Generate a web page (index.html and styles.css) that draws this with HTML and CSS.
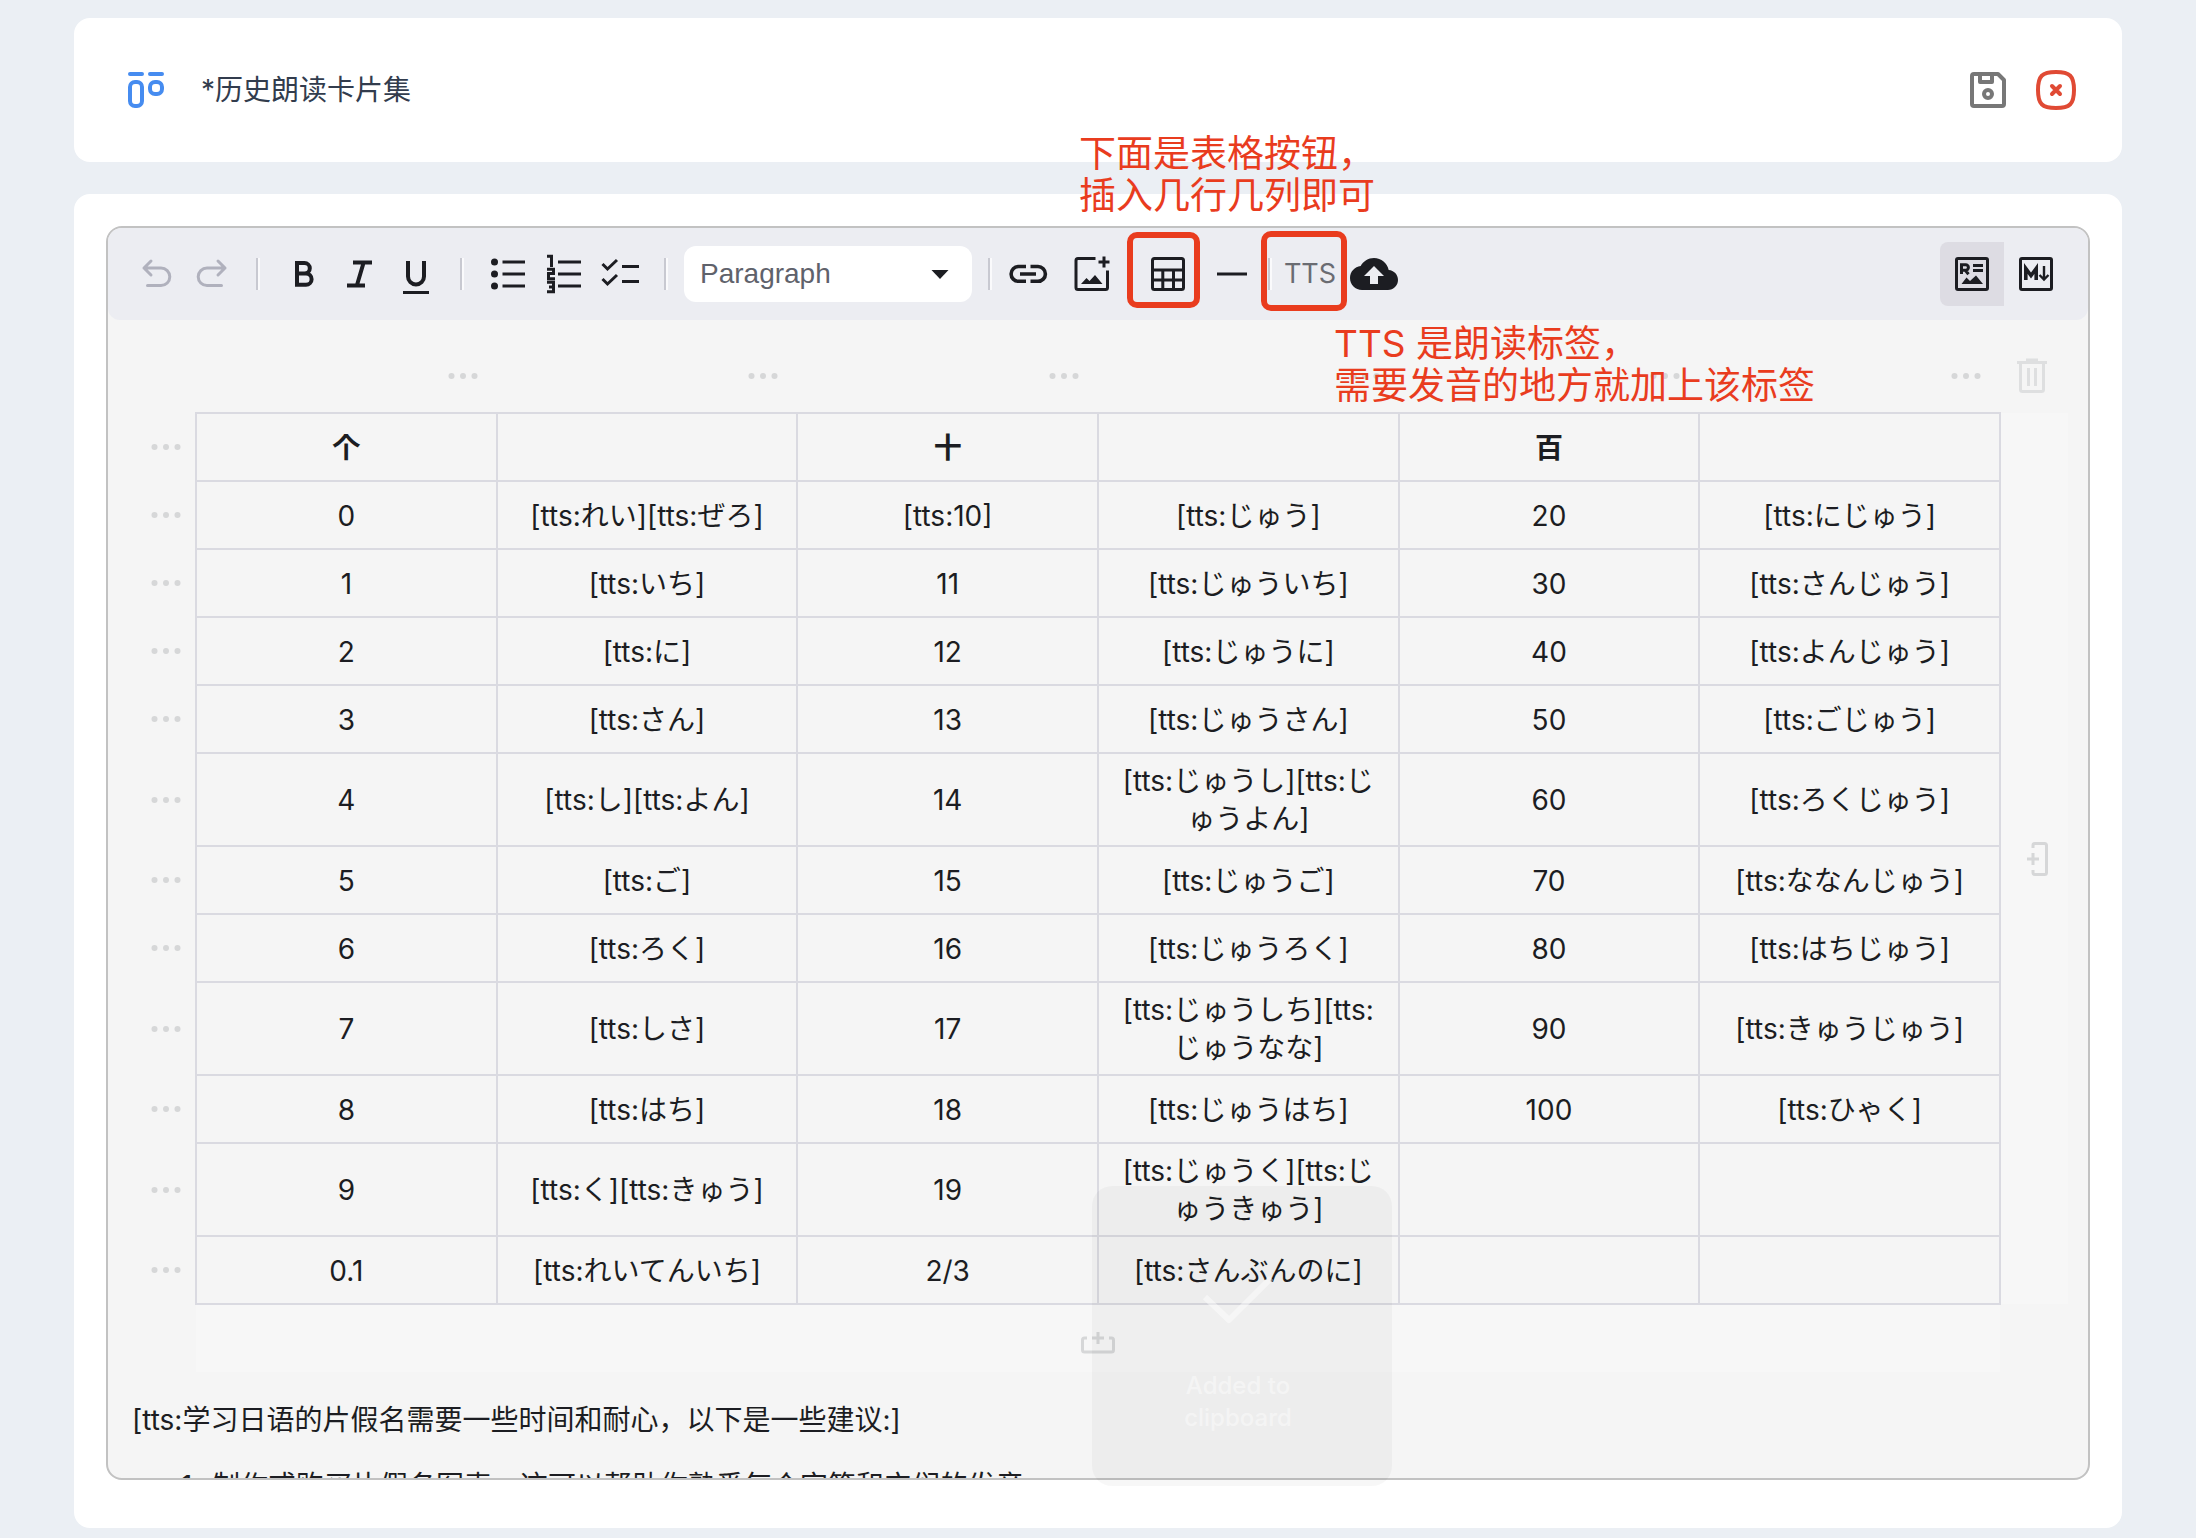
FILE: index.html
```html
<!DOCTYPE html>
<html lang="zh-CN">
<head>
<meta charset="utf-8">
<meta name="viewport" content="width=device-width, initial-scale=1">
<title>历史朗读卡片集</title>
<link rel="stylesheet" href="styles.css">
</head>
<body>
<svg class="sprite" aria-hidden="true">
  <symbol id="dots" viewBox="0 0 48 48"><g fill="currentColor" stroke="none"><circle cx="12.500" cy="24" r="3"/><circle cx="24" cy="24" r="3"/><circle cx="35.500" cy="24" r="3"/></g></symbol>
</svg>

<header class="card title-card">
  <svg class="icon logo" viewBox="0 0 48 48" aria-hidden="true"><path d="M8 8h12M28 8h12"/><rect x="8" y="16" width="12" height="24" rx="5"/><rect x="28" y="16" width="12" height="12" rx="5"/></svg>
  <h1>*历史朗读卡片集</h1>
  <div class="title-actions">
    <button type="button" class="save" aria-label="保存"><svg class="icon" viewBox="0 0 48 48"><path d="M10 8h24l6 6v24a2 2 0 0 1-2 2H10a2 2 0 0 1-2-2V10a2 2 0 0 1 2-2z"/><path d="M16 8v8h12V8"/><circle cx="24" cy="28" r="4"/></svg></button>
    <button type="button" class="close" aria-label="关闭"><svg class="icon" viewBox="0 0 48 48"><path d="M24 6C38 6 42 10 42 24S38 42 24 42 6 38 6 24 10 6 24 6z"/><path d="M20 20l8 8M28 20l-8 8"/></svg></button>
  </div>
</header>

<main class="card editor-card">
  <section class="editor">
    <div class="toolbar" role="toolbar" aria-label="编辑工具">
      <button type="button" class="tool muted" aria-label="Undo"><svg class="icon" viewBox="0 0 48 48"><path d="M12 18h17a8.800 8.800 0 0 1 0 17.600H15.500M19 11l-7 7 7 7"/></svg></button>
      <button type="button" class="tool muted" aria-label="Redo"><svg class="icon" viewBox="0 0 48 48"><path d="M37 18H19a8.800 8.800 0 0 0 0 17.600h14.500M30 11l7 7-7 7"/></svg></button>
      <span class="sep"></span>
      <button type="button" class="tool" aria-label="Bold"><svg class="icon heavy" viewBox="0 0 48 48"><path d="M17 13h7.500a5.300 5.300 0 0 1 0 10.600H17zM17 23.600h9a5.600 5.600 0 0 1 0 11.200h-9z"/></svg></button>
      <button type="button" class="tool" aria-label="Italic"><svg class="icon heavy" viewBox="0 0 48 48"><path d="M17 12.500h19M11 35.500h18M27.500 13l-6.500 22"/></svg></button>
      <button type="button" class="tool" aria-label="Underline"><svg class="icon" viewBox="0 0 48 48"><path stroke-width="4" d="M16 11v15.500a8 8 0 0 0 16 0V11"/><path d="M11 42.500h26"/></svg></button>
      <span class="sep"></span>
      <button type="button" class="tool" aria-label="Bulleted list"><svg class="icon" viewBox="0 0 48 48"><path d="M18.500 12H41M18.500 24H41M18.500 36H41"/><g class="solid"><circle cx="10.500" cy="12" r="3.500"/><circle cx="10.500" cy="24" r="3.500"/><circle cx="10.500" cy="36" r="3.500"/></g></svg></button>
      <button type="button" class="tool" aria-label="Numbered list"><svg class="icon" viewBox="0 0 48 48"><path d="M18 12h23M18 24h23M18 36h23"/><path stroke-width="3" d="M7 6.300h4.500V17M7 19.300h6.500v4.200H8.500v5.200H15M7 32.300h6.500v9.400H7M9 37h4.500"/></svg></button>
      <button type="button" class="tool" aria-label="Check list"><svg class="icon" viewBox="0 0 48 48"><path d="M6.500 14l5 5L21 10M6.500 29l5 5 9.500-9M26 16.500h17M26 31.500h17"/></svg></button>
      <span class="sep"></span>
      <div class="block-type">
        <select aria-label="Block type"><option>Paragraph</option><option>Quote</option><option>Heading 1</option></select>
        <svg class="icon caret" viewBox="0 0 48 48" aria-hidden="true"><path class="solid" d="M15.500 20h17L24 29z"/></svg>
      </div>
      <span class="sep tight-end"></span>
      <button type="button" class="tool wide" aria-label="Link"><svg class="icon" viewBox="0 0 48 48"><path stroke-width="3.600" d="M22 16.500h-7.500a7.400 7.400 0 0 0 0 14.800H22M26.500 16.500H34a7.400 7.400 0 0 1 0 14.800h-7.500M16 24h16"/></svg></button>
      <button type="button" class="tool wide" aria-label="Image"><svg class="icon" viewBox="0 0 48 48"><path d="M27.500 8.500H10a2 2 0 0 0-2 2V37.500a2 2 0 0 0 2 2h27.500a2 2 0 0 0 2-2V20.500M30.500 12h11M36 6.500v11"/><path class="solid" d="M13 34l5.500-6 3 3 5.500-6 7.500 9z"/></svg></button>
      <button type="button" class="tool wide table-tool" aria-label="Table"><svg class="icon" viewBox="0 0 48 48"><rect x="8.500" y="8.500" width="31" height="31" rx="2"/><path d="M8.500 20h31M8.500 30h31M18.800 20v19M29.500 20v19"/></svg></button>
      <button type="button" class="tool wide" aria-label="Thematic break"><svg class="icon" viewBox="0 0 48 48"><path d="M9 24h30"/></svg></button>
      <span class="sep tight"></span>
      <button type="button" class="tts">TTS</button>
      <button type="button" class="upload" aria-label="Upload"><svg class="icon" viewBox="0 0 24 24"><path class="solid" d="M19.350 10.040C18.670 6.590 15.640 4 12 4 9.110 4 6.600 5.640 5.350 8.040 2.340 8.360 0 10.910 0 14c0 3.310 2.690 6 6 6h13c2.760 0 5-2.240 5-5 0-2.640-2.050-4.780-4.650-4.960zM14 13v4h-4v-4H7l5-5 5 5h-3z"/></svg></button>
      <div class="modes">
        <button type="button" class="mode selected" aria-label="Rich text" aria-pressed="true"><svg class="icon" viewBox="0 0 48 48"><rect x="8.500" y="8.500" width="31" height="31" rx="1.500"/><path d="M13.500 24V14.800h4.200a2.600 2.600 0 0 1 0 5.400h-4M17.500 20.500l3 3.700M25 15.500h10M25 20.500h10"/><path class="solid" d="M13.500 34l5-6.500 3.500 3.500 6-5.500 7 8.500z"/></svg></button>
        <button type="button" class="mode" aria-label="Source" aria-pressed="false"><svg class="icon" viewBox="0 0 48 48"><rect x="8.500" y="8.500" width="31" height="31" rx="1.500"/><path stroke-width="3.600" d="M13.800 30V18.500l5.200 7 5.200-7V30"/><path stroke-width="2.400" d="M32 16v13M27.500 25l4.500 4.500 4.500-4.500"/></svg></button>
      </div>
    </div>

    <div class="content">
      <table class="grid" lang="ja">
        <colgroup><col class="tool-col"><col><col><col><col><col><col><col class="end-col"></colgroup>
        <thead>
          <tr class="col-tools">
            <td></td>
            <td><button type="button" aria-label="Column 1"><svg class="icon"><use href="#dots"/></svg></button></td>
            <td><button type="button" aria-label="Column 2"><svg class="icon"><use href="#dots"/></svg></button></td>
            <td><button type="button" aria-label="Column 3"><svg class="icon"><use href="#dots"/></svg></button></td>
            <td><button type="button" aria-label="Column 4"><svg class="icon"><use href="#dots"/></svg></button></td>
            <td><button type="button" aria-label="Column 5"><svg class="icon"><use href="#dots"/></svg></button></td>
            <td><button type="button" aria-label="Column 6"><svg class="icon"><use href="#dots"/></svg></button></td>
            <td class="trash"><button type="button" aria-label="Delete table"><svg class="icon" viewBox="0 0 48 48"><path d="M9 11.500h30M18 9h12M12.500 11.500v27a2 2 0 0 0 2 2h19a2 2 0 0 0 2-2v-27M20.500 17v18M27.500 17v18"/></svg></button></td>
          </tr>
        </thead>
        <tbody>
          <tr><td class="row-tool"><button type="button" aria-label="Row 1"><svg class="icon"><use href="#dots"/></svg></button></td><th>个</th><th></th><th>十</th><th></th><th>百</th><th></th>
            <td class="add-col" rowspan="12"><button type="button" aria-label="Add column"><svg class="icon" viewBox="0 0 48 48"><path d="M22 13v-2.500a2 2 0 0 1 2-2h9.500a2 2 0 0 1 2 2v27a2 2 0 0 1-2 2H24a2 2 0 0 1-2-2V35M16 24h12M22 18v12"/></svg></button></td></tr>
          <tr><td class="row-tool"><button type="button" aria-label="Row 2"><svg class="icon"><use href="#dots"/></svg></button></td><td>0</td><td>[tts:れい][tts:ぜろ]</td><td>[tts:10]</td><td>[tts:じゅう]</td><td>20</td><td>[tts:にじゅう]</td></tr>
          <tr><td class="row-tool"><button type="button" aria-label="Row 3"><svg class="icon"><use href="#dots"/></svg></button></td><td>1</td><td>[tts:いち]</td><td>11</td><td>[tts:じゅういち]</td><td>30</td><td>[tts:さんじゅう]</td></tr>
          <tr><td class="row-tool"><button type="button" aria-label="Row 4"><svg class="icon"><use href="#dots"/></svg></button></td><td>2</td><td>[tts:に]</td><td>12</td><td>[tts:じゅうに]</td><td>40</td><td>[tts:よんじゅう]</td></tr>
          <tr><td class="row-tool"><button type="button" aria-label="Row 5"><svg class="icon"><use href="#dots"/></svg></button></td><td>3</td><td>[tts:さん]</td><td>13</td><td>[tts:じゅうさん]</td><td>50</td><td>[tts:ごじゅう]</td></tr>
          <tr><td class="row-tool"><button type="button" aria-label="Row 6"><svg class="icon"><use href="#dots"/></svg></button></td><td>4</td><td>[tts:し][tts:よん]</td><td>14</td><td>[tts:じゅうし][tts:じゅうよん]</td><td>60</td><td>[tts:ろくじゅう]</td></tr>
          <tr><td class="row-tool"><button type="button" aria-label="Row 7"><svg class="icon"><use href="#dots"/></svg></button></td><td>5</td><td>[tts:ご]</td><td>15</td><td>[tts:じゅうご]</td><td>70</td><td>[tts:ななんじゅう]</td></tr>
          <tr><td class="row-tool"><button type="button" aria-label="Row 8"><svg class="icon"><use href="#dots"/></svg></button></td><td>6</td><td>[tts:ろく]</td><td>16</td><td>[tts:じゅうろく]</td><td>80</td><td>[tts:はちじゅう]</td></tr>
          <tr><td class="row-tool"><button type="button" aria-label="Row 9"><svg class="icon"><use href="#dots"/></svg></button></td><td>7</td><td>[tts:しさ]</td><td>17</td><td>[tts:じゅうしち][tts:じゅうなな]</td><td>90</td><td>[tts:きゅうじゅう]</td></tr>
          <tr><td class="row-tool"><button type="button" aria-label="Row 10"><svg class="icon"><use href="#dots"/></svg></button></td><td>8</td><td>[tts:はち]</td><td>18</td><td>[tts:じゅうはち]</td><td>100</td><td>[tts:ひゃく]</td></tr>
          <tr><td class="row-tool"><button type="button" aria-label="Row 11"><svg class="icon"><use href="#dots"/></svg></button></td><td>9</td><td>[tts:く][tts:きゅう]</td><td>19</td><td>[tts:じゅうく][tts:じゅうきゅう]</td><td></td><td></td></tr>
          <tr><td class="row-tool"><button type="button" aria-label="Row 12"><svg class="icon"><use href="#dots"/></svg></button></td><td>0.1</td><td>[tts:れいてんいち]</td><td>2/3</td><td>[tts:さんぶんのに]</td><td></td><td></td></tr>
        </tbody>
        <tfoot>
          <tr><td></td><td class="add-row" colspan="6"><button type="button" aria-label="Add row"><svg class="icon" viewBox="0 0 48 48"><path d="M13 23h-2.500a2 2 0 0 0-2 2v10a2 2 0 0 0 2 2h27a2 2 0 0 0 2-2V25a2 2 0 0 0-2-2H35M18 23h12M24 17v12"/></svg></button></td><td></td></tr>
        </tfoot>
      </table>
      <p>[tts:学习日语的片假名需要一些时间和耐心，以下是一些建议:]</p>
      <ol>
        <li>制作或购买片假名图表，这可以帮助你熟悉每个字符和它们的发音。</li>
      </ol>
    </div>
  </section>
</main>

<div class="toast" role="status">
  <svg viewBox="0 0 80 60" aria-hidden="true"><path d="M7 27l24 23L73 8"/></svg>
  <span>Added to<br>clipboard</span>
</div>

<div class="mark mark-table"></div>
<div class="mark mark-tts"></div>
<p class="note note-table">下面是表格按钮，<br>插入几行几列即可</p>
<p class="note note-tts">TTS 是朗读标签，<br>需要发音的地方就加上该标签</p>
</body>
</html>
```
FILE: styles.css
```css
* { box-sizing: border-box; }

body {
  position: relative;
  display: flex;
  flex-direction: column;
  gap: 32px;
  height: 100vh;
  margin: 0;
  padding: 18px 74px 10px;
  overflow: hidden;
  background: #ebeff4;
  color: #1c1d22;
  font: 28px/38px Inter, "Noto Sans CJK SC", sans-serif;
}

button {
  display: flex;
  align-items: center;
  justify-content: center;
  margin: 0;
  padding: 0;
  border: 0;
  background: none;
  color: inherit;
  font: inherit;
}

.sprite { position: absolute; width: 0; height: 0; }

.icon {
  display: block;
  flex: none;
  width: 48px;
  height: 48px;
  fill: none;
  stroke: currentColor;
  stroke-width: 3;
}
.icon .solid { fill: currentColor; stroke: none; }
.icon.heavy { stroke-width: 4; }

.card { background: #fff; border-radius: 16px; }

/* title bar */
.title-card {
  display: flex;
  align-items: center;
  flex: none;
  gap: 31px;
  height: 144px;
  padding: 0 42px 0 48px;
}
.title-card .icon { stroke-width: 4; stroke-linecap: round; stroke-linejoin: round; }
.logo { color: #468cf0; }
h1 { margin: 0; color: #323c4d; font-size: 28px; font-weight: 400; line-height: 38px; }
.title-actions { display: flex; gap: 20px; margin-left: auto; }
.save { color: #777; }
.close { color: #e04a34; }

/* editor */
.editor-card {
  display: flex;
  flex: 1;
  min-height: 0;
  padding: 32px 32px 48px;
}
.editor {
  flex: 1;
  min-width: 0;
  overflow: hidden;
  border: 2px solid #c2c2c2;
  border-radius: 16px;
  background: #f5f5f5;
}

.toolbar {
  display: flex;
  align-items: center;
  height: 92px;
  padding: 0 20px;
  border-radius: 12px;
  background: #ecedf2;
}
.tool { width: 56px; height: 64px; }
.wide { width: 64px; }
.table-tool { margin-left: 12px; }
.muted { color: #b0b1bd; }
.muted .icon { stroke-linecap: round; stroke-linejoin: round; }
.sep {
  width: 4px;
  height: 32px;
  margin: 0 16px;
  border-left: 2px solid #c8c9d1;
  background: #fafafc;
}
.tight-end { margin-right: 4px; }
.tight { margin: 0 4px; }

.block-type { display: grid; align-items: center; width: 288px; height: 56px; }
.block-type > * { grid-area: 1 / 1; }
.block-type select {
  width: 100%;
  height: 100%;
  padding: 0 16px;
  appearance: none;
  border: 0;
  border-radius: 12px;
  background: #fff;
  color: #5f626b;
  font: 28px/38px "Liberation Sans", sans-serif;
}
.caret { justify-self: end; margin-right: 8px; pointer-events: none; }

.tts { width: 68px; height: 64px; color: #6a6c72; font-size: 27px; }
.upload { margin-left: 6px; }
.modes { display: flex; margin-left: auto; }
.mode { width: 64px; height: 64px; }
.selected { border-radius: 8px 0 0 8px; background: #dddce3; }

/* document */
.content { padding: 24px 20px 24px 24px; }

.grid { width: 100%; table-layout: fixed; border-collapse: collapse; }
.tool-col { width: 64px; }
.end-col { width: 68px; }
.grid tr { height: 68px; }
.grid .col-tools { height: 69px; }
.grid td, .grid th { padding: 0; text-align: center; }
.grid th { font-weight: 600; }
.grid button { margin: 0 auto; color: #d6d7d8; }
.grid tbody th,
.grid tbody td:not(.row-tool, .add-col) {
  padding: 8px 16px 7px;
  border: 2px solid #dadae1;
}
.grid .row-tool { padding-left: 4px; }
.grid .col-tools td { padding-bottom: 4px; }
.grid .col-tools button { margin: 0 10px 0 auto; }
.grid .col-tools .trash { padding: 0 4px 8px 0; }
.grid .col-tools .trash button { margin: 0 auto; color: #dedfe0; }
.grid .add-col, .grid .add-row { background: #f7f7f7; }

.content p { margin: 29px 0 28px; }
.content ol { margin: 0; padding-left: 80px; }

/* fading confirmation */
.toast {
  position: absolute;
  left: 1092px;
  top: 1186px;
  display: flex;
  flex-direction: column;
  align-items: center;
  gap: 40px;
  width: 300px;
  height: 300px;
  padding: 84px 8px 0 0;
  border-radius: 20px;
  background: rgba(0, 0, 0, .03);
  color: rgba(255, 255, 255, .45);
  font-size: 24px;
  font-weight: 500;
  line-height: 32px;
  text-align: center;
}
.toast svg { width: 80px; height: 60px; fill: none; stroke: currentColor; stroke-width: 6; stroke-linejoin: round; }

/* annotations over the page */
.mark { position: absolute; border: 6px solid #e93c1e; border-radius: 10px; }
.mark-table { left: 1127px; top: 232px; width: 73px; height: 76px; }
.mark-tts { left: 1261px; top: 231px; width: 86px; height: 80px; }
.note {
  position: absolute;
  margin: 0;
  color: #e93c1e;
  font-size: 37px;
  font-weight: 400;
  line-height: 42px;
  white-space: nowrap;
}
.note-table { left: 1079px; top: 133px; }
.note-tts { left: 1334px; top: 323px; }
```
